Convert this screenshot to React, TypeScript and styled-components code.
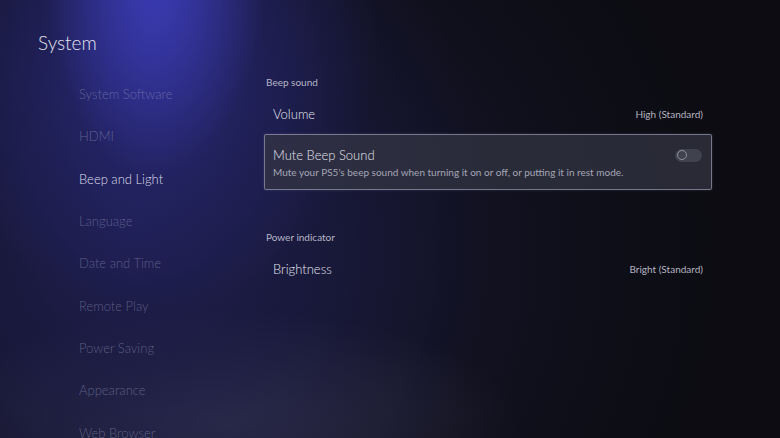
import styled, { createGlobalStyle } from "styled-components";

const GlobalStyle = createGlobalStyle`
  html, body {
    margin: 0;
    padding: 0;
    background: #0c0c12;
  }
  * {
    box-sizing: border-box;
  }
`;

const NAV_ITEMS = [
  "System Software",
  "HDMI",
  "Beep and Light",
  "Language",
  "Date and Time",
  "Remote Play",
  "Power Saving",
  "Appearance",
  "Web Browser",
];

const ACTIVE = "Beep and Light";

const Screen = styled.div`
  width: 780px;
  height: 438px;
  overflow: hidden;
  display: flex;
  font-family: Lato, "Open Sans", sans-serif;
  color: #e4e4ee;
  background:
    radial-gradient(ellipse 110px 210px at 155px -30px, rgba(62, 62, 190, 0.95), rgba(50, 50, 160, 0) 100%),
    radial-gradient(ellipse 230px 270px at 150px 40px, rgba(45, 45, 140, 0.7), rgba(40, 40, 120, 0) 100%),
    radial-gradient(ellipse 360px 420px at 130px 230px, rgba(30, 30, 80, 0.9), rgba(28, 28, 70, 0) 100%),
    radial-gradient(ellipse 300px 110px at 220px 420px, rgba(70, 70, 90, 0.55), rgba(60, 60, 80, 0) 100%),
    radial-gradient(ellipse 520px 500px at 200px 260px, rgba(26, 26, 58, 0.8), rgba(20, 20, 40, 0) 100%),
    #0c0c12;
`;

const Sidebar = styled.nav`
  width: 264px;
  flex-shrink: 0;
  padding: 31px 0 0 38px;
`;

const Title = styled.h1`
  margin: 0 0 18px;
  font-size: 19px;
  line-height: 24px;
  font-weight: 300;
  color: #e2e2ec;
`;

const NavList = styled.ul`
  list-style: none;
  margin: 0;
  padding: 0 0 0 41px;
`;

const NavItem = styled.li<{ $active: boolean }>`
  height: 42.3px;
  display: flex;
  align-items: center;
  font-size: 13px;
  font-weight: 300;
  color: ${({ $active }) => ($active ? "#dcdcea" : "rgba(170, 172, 205, 0.45)")};
`;

const Panel = styled.main`
  width: 448px;
  padding-top: 74px;
`;

const SectionLabel = styled.div<{ $gap?: number }>`
  height: 16px;
  line-height: 16px;
  font-size: 10px;
  padding-left: 2px;
  color: #b6b6c6;
  margin-top: ${({ $gap }) => $gap ?? 0}px;
`;

const Row = styled.div`
  height: 44px;
  padding: 4px 9px 0;
  display: flex;
  align-items: center;
  justify-content: space-between;
`;

const RowTitle = styled.span`
  font-size: 13px;
  font-weight: 300;
  color: #e4e4ee;
`;

const RowValue = styled.span`
  font-size: 10px;
  color: #b4b4c0;
`;

const Card = styled.div`
  height: 56px;
  padding: 11px 8px 0 8px;
  border: 1px solid rgba(170, 170, 195, 0.6);
  border-radius: 2px;
  background: rgba(52, 54, 68, 0.72);
  box-shadow: 0 0 3px rgba(140, 140, 180, 0.25);
`;

const CardHead = styled.div`
  height: 18px;
  display: flex;
  align-items: center;
  justify-content: space-between;
`;

const CardText = styled.div`
  margin-top: 1px;
  height: 14px;
  line-height: 14px;
  font-size: 10px;
  color: #a4a6b6;
`;

const Switch = styled.div`
  width: 27px;
  height: 13px;
  border-radius: 7px;
  background: #40424e;
  display: flex;
  align-items: center;
  padding-left: 2px;
  margin-right: 1px;
`;

const Knob = styled.div`
  width: 10px;
  height: 10px;
  border-radius: 50%;
  border: 1.3px solid #8e909c;
`;

export default function App() {
  return (
    <>
      <GlobalStyle />
      <Screen>
        <Sidebar>
          <Title>System</Title>
          <NavList>
            {NAV_ITEMS.map((item) => (
              <NavItem key={item} $active={item === ACTIVE}>
                {item}
              </NavItem>
            ))}
          </NavList>
        </Sidebar>
        <Panel>
          <SectionLabel>Beep sound</SectionLabel>
          <Row>
            <RowTitle>Volume</RowTitle>
            <RowValue>High (Standard)</RowValue>
          </Row>
          <Card>
            <CardHead>
              <RowTitle>Mute Beep Sound</RowTitle>
              <Switch>
                <Knob />
              </Switch>
            </CardHead>
            <CardText>
              Mute your PS5's beep sound when turning it on or off, or putting it in rest mode.
            </CardText>
          </Card>
          <SectionLabel $gap={39}>Power indicator</SectionLabel>
          <Row>
            <RowTitle>Brightness</RowTitle>
            <RowValue>Bright (Standard)</RowValue>
          </Row>
        </Panel>
      </Screen>
    </>
  );
}
